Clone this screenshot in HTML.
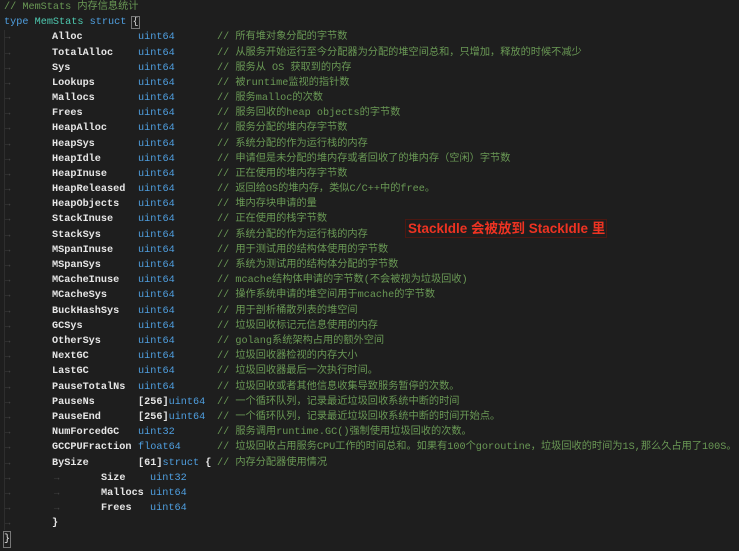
<!DOCTYPE html>
<html><head><meta charset="utf-8"><style>
body{margin:0;width:739px;height:551px;background:#1e1e1e;overflow:hidden;position:relative;font-family:"Liberation Mono","Noto Sans CJK SC",monospace;font-size:10.2px;color:#d4d4d4}
.r{position:absolute;left:0;width:739px;height:15px;line-height:15px;white-space:pre}
.r span{position:absolute;top:0}
.a{left:5px;color:#4a4a4a;font-size:9px}
.n{left:52px;color:#e6e6e6;font-weight:bold}
.t{left:138px;color:#4f9fe0}
.c{left:217px;color:#6a9955}
.g{color:#6a9955}.b{color:#4f9fe0}.k{color:#4ec9b0}
.note{position:absolute;left:405px;top:219px;width:200px;height:17px;border:1px solid #4a1812;color:#ee3322;font-family:"Liberation Sans","Noto Sans CJK SC",sans-serif;font-size:13.5px;font-weight:bold;line-height:17px;text-indent:2px;white-space:nowrap}
.guide{position:absolute;left:4px;top:30px;width:1px;height:500px;background:#2e2e2e}
</style></head><body>
<div class="guide"></div>
<div class="r" style="top:0px"><span style="left:4px" class="g">// MemStats 内存信息统计</span></div>
<div class="r" style="top:15px"><span style="left:4px"><span class="b" style="position:static">type</span> <span class="k" style="position:static">MemStats</span> <span class="b" style="position:static">struct</span> <span style="position:static;outline:1px solid #777">{</span></span></div>
<div class="r" style="top:30px"><span class="a">→</span><span class="n">Alloc</span><span class="t">uint64</span><span class="c">// 所有堆对象分配的字节数</span></div>
<div class="r" style="top:46px"><span class="a">→</span><span class="n">TotalAlloc</span><span class="t">uint64</span><span class="c">// 从服务开始运行至今分配器为分配的堆空间总和，只增加，释放的时候不减少</span></div>
<div class="r" style="top:61px"><span class="a">→</span><span class="n">Sys</span><span class="t">uint64</span><span class="c">// 服务从 OS 获取到的内存</span></div>
<div class="r" style="top:76px"><span class="a">→</span><span class="n">Lookups</span><span class="t">uint64</span><span class="c">// 被runtime监视的指针数</span></div>
<div class="r" style="top:91px"><span class="a">→</span><span class="n">Mallocs</span><span class="t">uint64</span><span class="c">// 服务malloc的次数</span></div>
<div class="r" style="top:106px"><span class="a">→</span><span class="n">Frees</span><span class="t">uint64</span><span class="c">// 服务回收的heap objects的字节数</span></div>
<div class="r" style="top:121px"><span class="a">→</span><span class="n">HeapAlloc</span><span class="t">uint64</span><span class="c">// 服务分配的堆内存字节数</span></div>
<div class="r" style="top:137px"><span class="a">→</span><span class="n">HeapSys</span><span class="t">uint64</span><span class="c">// 系统分配的作为运行栈的内存</span></div>
<div class="r" style="top:152px"><span class="a">→</span><span class="n">HeapIdle</span><span class="t">uint64</span><span class="c">// 申请但是未分配的堆内存或者回收了的堆内存（空闲）字节数</span></div>
<div class="r" style="top:167px"><span class="a">→</span><span class="n">HeapInuse</span><span class="t">uint64</span><span class="c">// 正在使用的堆内存字节数</span></div>
<div class="r" style="top:182px"><span class="a">→</span><span class="n">HeapReleased</span><span class="t">uint64</span><span class="c">// 返回给OS的堆内存，类似C/C++中的free。</span></div>
<div class="r" style="top:197px"><span class="a">→</span><span class="n">HeapObjects</span><span class="t">uint64</span><span class="c">// 堆内存块申请的量</span></div>
<div class="r" style="top:212px"><span class="a">→</span><span class="n">StackInuse</span><span class="t">uint64</span><span class="c">// 正在使用的栈字节数</span></div>
<div class="r" style="top:228px"><span class="a">→</span><span class="n">StackSys</span><span class="t">uint64</span><span class="c">// 系统分配的作为运行栈的内存</span></div>
<div class="r" style="top:243px"><span class="a">→</span><span class="n">MSpanInuse</span><span class="t">uint64</span><span class="c">// 用于测试用的结构体使用的字节数</span></div>
<div class="r" style="top:258px"><span class="a">→</span><span class="n">MSpanSys</span><span class="t">uint64</span><span class="c">// 系统为测试用的结构体分配的字节数</span></div>
<div class="r" style="top:273px"><span class="a">→</span><span class="n">MCacheInuse</span><span class="t">uint64</span><span class="c">// mcache结构体申请的字节数(不会被视为垃圾回收)</span></div>
<div class="r" style="top:288px"><span class="a">→</span><span class="n">MCacheSys</span><span class="t">uint64</span><span class="c">// 操作系统申请的堆空间用于mcache的字节数</span></div>
<div class="r" style="top:304px"><span class="a">→</span><span class="n">BuckHashSys</span><span class="t">uint64</span><span class="c">// 用于剖析桶散列表的堆空间</span></div>
<div class="r" style="top:319px"><span class="a">→</span><span class="n">GCSys</span><span class="t">uint64</span><span class="c">// 垃圾回收标记元信息使用的内存</span></div>
<div class="r" style="top:334px"><span class="a">→</span><span class="n">OtherSys</span><span class="t">uint64</span><span class="c">// golang系统架构占用的额外空间</span></div>
<div class="r" style="top:349px"><span class="a">→</span><span class="n">NextGC</span><span class="t">uint64</span><span class="c">// 垃圾回收器检视的内存大小</span></div>
<div class="r" style="top:364px"><span class="a">→</span><span class="n">LastGC</span><span class="t">uint64</span><span class="c">// 垃圾回收器最后一次执行时间。</span></div>
<div class="r" style="top:380px"><span class="a">→</span><span class="n">PauseTotalNs</span><span class="t">uint64</span><span class="c">// 垃圾回收或者其他信息收集导致服务暂停的次数。</span></div>
<div class="r" style="top:395px"><span class="a">→</span><span class="n">PauseNs</span><span class="t"><b style="color:#e6e6e6">[256]</b>uint64</span><span class="c">// 一个循环队列，记录最近垃圾回收系统中断的时间</span></div>
<div class="r" style="top:410px"><span class="a">→</span><span class="n">PauseEnd</span><span class="t"><b style="color:#e6e6e6">[256]</b>uint64</span><span class="c">// 一个循环队列，记录最近垃圾回收系统中断的时间开始点。</span></div>
<div class="r" style="top:425px"><span class="a">→</span><span class="n">NumForcedGC</span><span class="t">uint32</span><span class="c">// 服务调用runtime.GC()强制使用垃圾回收的次数。</span></div>
<div class="r" style="top:440px"><span class="a">→</span><span class="n">GCCPUFraction</span><span class="t">float64</span><span class="c">// 垃圾回收占用服务CPU工作的时间总和。如果有100个goroutine，垃圾回收的时间为1S,那么久占用了100S。</span></div>
<div class="r" style="top:456px"><span class="a">→</span><span class="n">BySize</span><span class="t"><b style="color:#e6e6e6">[61]</b>struct <b style="color:#e6e6e6">{</b></span><span class="c">// 内存分配器使用情况</span></div>
<div class="r" style="top:471px"><span class="a">→</span><span class="a" style="left:54px">→</span><span class="n" style="left:101px">Size</span><span class="t" style="left:150px">uint32</span></div>
<div class="r" style="top:486px"><span class="a">→</span><span class="a" style="left:54px">→</span><span class="n" style="left:101px">Mallocs</span><span class="t" style="left:150px">uint64</span></div>
<div class="r" style="top:501px"><span class="a">→</span><span class="a" style="left:54px">→</span><span class="n" style="left:101px">Frees</span><span class="t" style="left:150px">uint64</span></div>
<div class="r" style="top:516px"><span class="a">→</span><span class="n">}</span></div>
<div class="r" style="top:532px"><span style="left:4px;outline:1px solid #777;color:#e6e6e6">}</span></div>
<div class="note">StackIdle 会被放到 StackIdle 里</div>
</body></html>
